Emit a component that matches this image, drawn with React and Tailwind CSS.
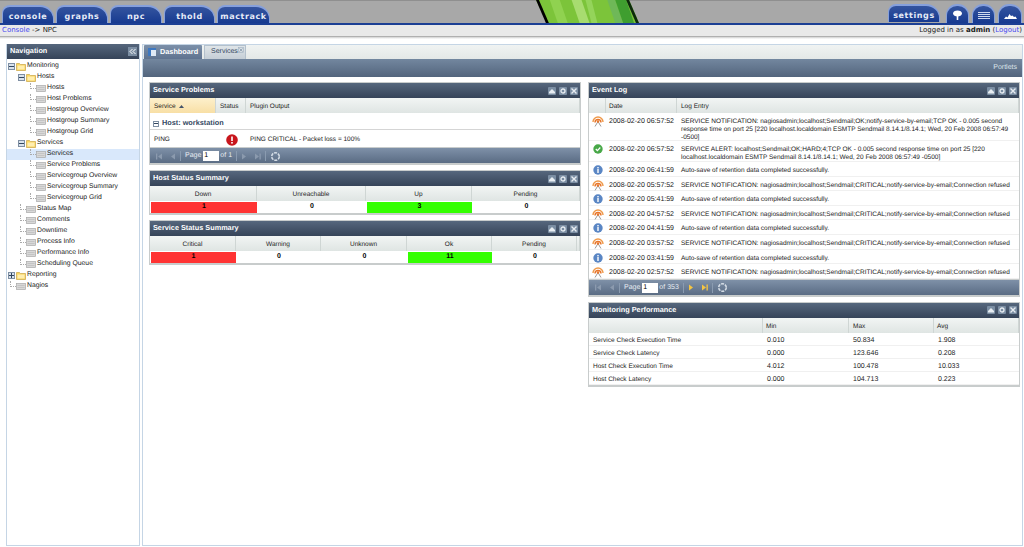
import React from 'react';

const FONT = { fontFamily: '"Liberation Sans", Arial, sans-serif' };

const LOG_ROWS = [
  { icon: 'rss', date: '2008-02-20 06:57:52', h: 'h-[28px]', text: 'SERVICE NOTIFICATION: nagiosadmin;localhost;Sendmail;OK;notify-service-by-email;TCP OK - 0.005 second response time on port 25 [220 localhost.localdomain ESMTP Sendmail 8.14.1/8.14.1; Wed, 20 Feb 2008 06:57:49 -0500]' },
  { icon: 'ok', date: '2008-02-20 06:57:52', h: 'h-[21px]', text: 'SERVICE ALERT: localhost;Sendmail;OK;HARD;4;TCP OK - 0.005 second response time on port 25 [220 localhost.localdomain ESMTP Sendmail 8.14.1/8.14.1; Wed, 20 Feb 2008 06:57:49 -0500]' },
  { icon: 'info', date: '2008-02-20 06:41:59', text: 'Auto-save of retention data completed successfully.' },
  { icon: 'rss', date: '2008-02-20 05:57:52', text: 'SERVICE NOTIFICATION: nagiosadmin;localhost;Sendmail;CRITICAL;notify-service-by-email;Connection refused' },
  { icon: 'info', date: '2008-02-20 05:41:59', text: 'Auto-save of retention data completed successfully.' },
  { icon: 'rss', date: '2008-02-20 04:57:52', text: 'SERVICE NOTIFICATION: nagiosadmin;localhost;Sendmail;CRITICAL;notify-service-by-email;Connection refused' },
  { icon: 'info', date: '2008-02-20 04:41:59', text: 'Auto-save of retention data completed successfully.' },
  { icon: 'rss', date: '2008-02-20 03:57:52', text: 'SERVICE NOTIFICATION: nagiosadmin;localhost;Sendmail;CRITICAL;notify-service-by-email;Connection refused' },
  { icon: 'info', date: '2008-02-20 03:41:59', text: 'Auto-save of retention data completed successfully.' },
  { icon: 'rss', date: '2008-02-20 02:57:52', text: 'SERVICE NOTIFICATION: nagiosadmin;localhost;Sendmail;CRITICAL;notify-service-by-email;Connection refused' },
];

const PERF_ROWS = [
  ['Service Check Execution Time', '0.010', '50.834', '1.908'],
  ['Service Check Latency', '0.000', '123.646', '0.208'],
  ['Host Check Execution Time', '4.012', '100.478', '10.033'],
  ['Host Check Latency', '0.000', '104.713', '0.223'],
];

const TREE = [
  { label: 'Monitoring', type: 'open', depth: 0 },
  { label: 'Hosts', type: 'open', depth: 1 },
  { label: 'Hosts', depth: 2 },
  { label: 'Host Problems', depth: 2 },
  { label: 'Hostgroup Overview', depth: 2 },
  { label: 'Hostgroup Summary', depth: 2 },
  { label: 'Hostgroup Grid', depth: 2 },
  { label: 'Services', type: 'open', depth: 1 },
  { label: 'Services', depth: 2, selected: true },
  { label: 'Service Problems', depth: 2 },
  { label: 'Servicegroup Overview', depth: 2 },
  { label: 'Servicegroup Summary', depth: 2 },
  { label: 'Servicegroup Grid', depth: 2 },
  { label: 'Status Map', depth: 1 },
  { label: 'Comments', depth: 1 },
  { label: 'Downtime', depth: 1 },
  { label: 'Process Info', depth: 1 },
  { label: 'Performance Info', depth: 1 },
  { label: 'Scheduling Queue', depth: 1 },
  { label: 'Reporting', type: 'closed', depth: 0 },
  { label: 'Nagios', depth: 0 },
];

function TopTab({ label, w }) {
  return (
    <div className={`${w} h-[18px] mr-[2px] pt-[4px] rounded-tl-[8px] rounded-tr-[14px] bg-gradient-to-b from-[#34549f] to-[#173a90] border-t-2 border-l border-r border-[#86a0dc] flex items-center justify-center text-[#e6ebf7] text-[8px] font-bold tracking-[0.6px]`} style={{ fontFamily: '"DejaVu Sans", sans-serif' }}>
      {label}
    </div>
  );
}

function IconTab({ children, w = 'w-[23px]' }) {
  return (
    <div className={`${w} h-[19px] ml-[3px] pt-[2px] rounded-t-[11px] bg-gradient-to-b from-[#34549f] to-[#173a90] border-t-2 border-l border-r border-[#86a0dc] flex items-center justify-center`}>
      {children}
    </div>
  );
}

function Logo() {
  return (
    <svg width="103" height="23" viewBox="0 0 104 23" className="ml-[264px] shrink-0">
      <polygon points="0,0 94,0 104,23 11,23" fill="#7cc43a" />
      <polygon points="14,0 24,0 32,23 22,23" fill="#90d250" />
      <polygon points="36,0 46,0 54,23 44,23" fill="#a8dc70" />
      <polygon points="50,0 56,0 62,23 56,23" fill="#94d45a" />
      <polygon points="72,0 80,0 88,23 80,23" fill="#6fb858" />
      <polygon points="80,0 91,0 99,23 88,23" fill="#3f9e2f" />
      <polygon points="0,0 3,0 13,23 10,23" fill="#000" />
      <polygon points="91,0 94,0 104,23 101,23" fill="#0c2a0c" />
    </svg>
  );
}

function PanelButton({ kind }) {
  return (
    <span className="w-[8px] h-[8px] rounded-[1px] bg-[#7b8ea3] flex items-center justify-center">
      <svg width="6" height="6" viewBox="0 0 6 6">
        {kind === 'min' && <path d="M0 5.5h6V4L3 1 0 4z" fill="#e8edf2" />}
        {kind === 'gear' && <circle cx="3" cy="3" r="2" stroke="#e8edf2" fill="none" strokeWidth="1.3" />}
        {kind === 'x' && <path d="M0.5 0.5l5 5M5.5 0.5l-5 5" stroke="#e8edf2" strokeWidth="1.4" />}
      </svg>
    </span>
  );
}

function Panel({ title, children, className = '' }) {
  return (
    <div className={`border border-[#c8cccc] border-b-2 bg-white ${className}`}>
      <div className="h-[15px] bg-gradient-to-b from-[#56677d] to-[#364459] flex items-center justify-between pl-[3px] pr-[2px] text-white text-[7.3px] font-bold">
        <span>{title}</span>
        <span className="flex gap-[3px]">
          <PanelButton kind="min" />
          <PanelButton kind="gear" />
          <PanelButton kind="x" />
        </span>
      </div>
      {children}
    </div>
  );
}

function HeadCell({ children, className = '' }) {
  return (
    <div className={`h-[15px] pt-[3px] bg-gradient-to-b from-[#f2f5f4] to-[#dfe5e3] border-r border-[#cfd6d4] flex items-center text-[6.5px] text-[#222] ${className}`}>
      {children}
    </div>
  );
}

function PagerIcon({ dir, bar, active }) {
  const color = active ? '#f5c542' : '#8b9aae';
  return (
    <svg width="7" height="7" viewBox="0 0 7 7" className="shrink-0">
      {dir === 'left' ? <polygon points="6,0.5 6,6.5 2,3.5" fill={color} /> : <polygon points="1,0.5 1,6.5 5,3.5" fill={color} />}
      {bar && <rect x={dir === 'left' ? 0 : 5.5} y="0.5" width="1.3" height="6" fill={color} />}
    </svg>
  );
}

function Pager({ total, active }) {
  return (
    <div className="h-[16px] pt-[1px] bg-gradient-to-b from-[#7f91a8] to-[#5a6c84] flex items-center pl-[6px] text-[7px] text-white border-t border-[#c8cccc]">
      <PagerIcon dir="left" bar />
      <span className="w-[6px]" />
      <PagerIcon dir="left" />
      <span className="w-px h-[10px] bg-[#8a9bb0] mx-[4px]" />
      <span className="text-[#e8edf2]">Page</span>
      <span className="w-[16px] h-[10px] bg-white text-black ml-[2px] mr-[1px] pl-[1px] leading-[10px]">1</span>
      <span className="text-[#e8edf2]">of {total}</span>
      <span className="w-px h-[10px] bg-[#8a9bb0] mx-[4px]" />
      <PagerIcon dir="right" active={active} />
      <span className="w-[6px]" />
      <PagerIcon dir="right" bar active={active} />
      <span className="w-px h-[10px] bg-[#8a9bb0] mx-[4px]" />
      <svg width="11" height="11" viewBox="0 0 11 11">
        <circle cx="5.5" cy="5.5" r="3.8" fill="none" stroke="#d5dde6" strokeWidth="1.6" strokeDasharray="3 1" />
      </svg>
    </div>
  );
}

function SummaryPanel({ title, cols, gridClass }) {
  return (
    <Panel title={title}>
      <div className={`grid ${gridClass}`}>
        {cols.map((c, i) => (
          <HeadCell key={i} className="justify-center">{c.label}</HeadCell>
        ))}
        {cols.map((c, i) => (
          <div key={i} className="h-[12px] flex items-end justify-center text-[7px] font-bold text-black">
            <span className={`w-full h-[11px] flex items-center justify-center ml-px ${c.bg || ''}`}>{c.value}</span>
          </div>
        ))}
      </div>
    </Panel>
  );
}

function TreeIcon({ type }) {
  if (type) {
    return (
      <svg width="10" height="9" viewBox="0 0 10 9" className="shrink-0">
        <path d="M0.5 1.5h3l1 1h5v6h-9z" fill="#fbd75f" stroke="#c9a545" strokeWidth="0.7" />
        <rect x="1.5" y="3.5" width="7" height="4" fill="#ffeeb0" />
      </svg>
    );
  }
  return (
    <svg width="10" height="7" viewBox="0 0 10 7" className="shrink-0">
      <rect x="0.5" y="0.5" width="9" height="6" fill="#d8d8d8" stroke="#a8a8a8" strokeWidth="0.7" />
      <path d="M1.5 2.5h7M1.5 4.5h7" stroke="#bcbcbc" strokeWidth="0.7" />
    </svg>
  );
}

function Expander({ open }) {
  return (
    <span className="w-[7px] h-[7px] shrink-0 mr-px border border-[#7f8fa3] bg-[#d9e2ec] flex items-center justify-center relative">
      <span className="w-[5px] h-px bg-[#33475f]" />
      {!open && <span className="w-px h-[5px] bg-[#33475f] absolute" />}
    </span>
  );
}

function TreeRow({ item }) {
  const indent = item.type
    ? item.depth === 0 ? 'pl-[1px]' : 'pl-[11px]'
    : item.depth === 0 ? 'pl-[3px]' : item.depth === 1 ? 'pl-[13px]' : 'pl-[23px]';
  return (
    <div className={`h-[11px] flex items-center ${indent} text-[6.8px] text-[#222] ${item.selected ? 'bg-[#d9e8fb]' : ''}`}>
      {item.type ? <Expander open={item.type === 'open'} /> : <span className="w-[6px] h-[6px] shrink-0 border-l border-b border-dotted border-[#aaa] -translate-y-[3px]" />}
      <TreeIcon type={item.type} />
      <span className="ml-px whitespace-nowrap">{item.label}</span>
    </div>
  );
}

function LogIcon({ kind }) {
  if (kind === 'rss') {
    return (
      <svg width="12" height="11" viewBox="0 0 12 11">
        <path d="M1 6a5 5 0 0 1 10 0" fill="none" stroke="#ef9a4a" strokeWidth="1.4" />
        <path d="M3 6.5a3 3 0 0 1 6 0" fill="none" stroke="#e8762b" strokeWidth="1.4" />
        <path d="M6 5.5l-3 5M6 5.5l3 5" fill="none" stroke="#9a9a9a" strokeWidth="1" />
        <circle cx="6" cy="5.5" r="1.2" fill="#e8762b" />
      </svg>
    );
  }
  if (kind === 'ok') {
    return (
      <svg width="10" height="10" viewBox="0 0 10 10">
        <circle cx="5" cy="5" r="4.7" fill="#48a848" />
        <path d="M2.8 5l1.6 1.7 2.9-3.2" fill="none" stroke="#fff" strokeWidth="1.2" />
      </svg>
    );
  }
  return (
    <svg width="10" height="10" viewBox="0 0 10 10">
      <circle cx="5" cy="5" r="4.7" fill="#5a86c4" />
      <rect x="4.3" y="2" width="1.4" height="1.4" fill="#fff" />
      <rect x="4.3" y="4" width="1.4" height="4" fill="#fff" />
    </svg>
  );
}

export default function App() {
  return (
    <div className="w-[1024px] h-[547px] overflow-hidden bg-white flex flex-col [text-rendering:geometricPrecision]" style={FONT}>
      <header className="h-[25px] shrink-0 bg-[#a8a8a8] border-t border-[#8f8f8f] border-b-2 border-b-[#1c3f94] flex items-end pl-[2px]">
        <TopTab label="console" w="w-[52px]" />
        <TopTab label="graphs" w="w-[52px]" />
        <TopTab label="npc" w="w-[52px]" />
        <TopTab label="thold" w="w-[51px]" />
        <TopTab label="mactrack" w="w-[53px]" />
        <Logo />
        <div className="ml-auto flex pr-[2px]">
          <TopTab label="settings" w="w-[52px]" />
          <span className="w-[1px]" />
          <IconTab>
            <svg width="11" height="11" viewBox="0 0 11 11">
              <path d="M1 3.5C1 1.5 3 .5 5.5.5S10 1.5 10 3.5 7.5 6.5 5.5 6.5 1 5.5 1 3.5z" fill="#fff" />
              <rect x="4.7" y="6" width="1.6" height="4" fill="#fff" />
            </svg>
          </IconTab>
          <IconTab>
            <svg width="12" height="8" viewBox="0 0 12 8">
              <path d="M0 .5h12M0 2.5h12M0 4.5h12M0 6.5h12" stroke="#cfdaf0" strokeWidth="1" />
            </svg>
          </IconTab>
          <IconTab w="w-[24px]">
            <svg width="13" height="6" viewBox="0 0 13 6">
              <path d="M0 6l2-2.5 1.5 1L5.5 1 7 3l1.5-.5L10 4l1.5-.5L13 6z" fill="#fff" />
            </svg>
          </IconTab>
        </div>
      </header>

      <div className="h-[12px] shrink-0 bg-[#e9e9e9] flex items-center justify-between px-[2px] text-[7px] text-[#222] border-b border-[#b0b0b0]" style={{ fontFamily: '"DejaVu Sans", sans-serif' }}>
        <span><span className="text-[#4a4af0]">Console</span> -&gt; NPC</span>
        <span>Logged in as <b>admin</b> (<span className="text-[#4a4af0]">Logout</span>)</span>
      </div>
      <div className="h-[2px] shrink-0 bg-gradient-to-b from-[#cfcfcf] to-white" />

      <div className="flex-1 min-h-0 flex pt-[5px] pl-[6px] pr-[1px] pb-[1px] gap-[2px]">
        <aside className="w-[134px] shrink-0 border border-[#c5d5e5] border-t-0 flex flex-col">
          <div className="h-[15px] bg-gradient-to-b from-[#56677d] to-[#364459] flex items-center justify-between pl-[3px] pr-[2px] text-white text-[7.3px] font-bold">
            <span>Navigation</span>
            <span className="w-[9px] h-[9px] bg-[#7b8ea3] flex items-center justify-center">
              <svg width="7" height="7" viewBox="0 0 7 7">
                <path d="M3.5 1L1 3.5 3.5 6M6.5 1L4 3.5 6.5 6" fill="none" stroke="#fff" strokeWidth="1" />
              </svg>
            </span>
          </div>
          <div className="pt-[2px]">
            {TREE.map((item, i) => <TreeRow key={i} item={item} />)}
          </div>
        </aside>

        <main className="flex-1 min-w-0 border border-[#c5d5e5] flex flex-col">
          <div className="h-[14px] shrink-0 bg-gradient-to-b from-[#f0f3f2] to-[#e4e8e7] flex items-end pl-[1px] gap-[2px]">
            <div className="h-[14px] w-[58px] bg-gradient-to-b from-[#7c90a9] to-[#5f7390] flex items-center pl-[4px] gap-[4px] text-white text-[7.3px] font-bold rounded-t-[1px]">
              <svg width="8" height="8" viewBox="0 0 8 8">
                <rect width="8" height="8" fill="#dfe9f5" />
                <rect y="0" width="8" height="2" fill="#3e78c0" />
                <rect y="2" width="3" height="6" fill="#3e78c0" />
              </svg>
              Dashboard
            </div>
            <div className="h-[14px] w-[42px] bg-gradient-to-b from-[#dfe5e8] to-[#c5ced6] border border-b-0 border-[#b3c0cc] flex items-center pl-[6px] text-[#33475f] text-[7px] relative">
              Services
              <svg width="6" height="6" viewBox="0 0 6 6" className="absolute right-[1px] top-[1px]">
                <rect x="0.5" y="0.5" width="5" height="5" fill="none" stroke="#9fb0c0" strokeWidth="0.6" />
                <path d="M1.5 1.5l3 3M4.5 1.5l-3 3" stroke="#7f92a6" strokeWidth="0.7" />
              </svg>
            </div>
          </div>
          <div className="h-[18px] shrink-0 bg-gradient-to-b from-[#73879f] to-[#53657d] flex items-center justify-end pr-[5px] text-[7px] text-[#dbe3ea]">
            Portlets
          </div>

          <div className="flex gap-[7px] pl-[6px] pt-[5px]">
            <div className="w-[432px] flex flex-col gap-[5px]">
              <Panel title="Service Problems">
                <div className="flex">
                  <HeadCell className="w-[66px] pl-[4px] !from-[#fdf0cc] !to-[#f8dfa5] gap-[3px]">
                    Service
                    <svg width="5" height="4" viewBox="0 0 5 4"><polygon points="2.5,0 5,3 0,3" fill="#44546a" /></svg>
                  </HeadCell>
                  <HeadCell className="w-[30px] pl-[4px]">Status</HeadCell>
                  <HeadCell className="flex-1 pl-[4px]">Plugin Output</HeadCell>
                </div>
                <div className="h-[17px] pt-[5px] flex items-center pl-[3px] gap-[3px] text-[7.3px] font-bold text-[#33475f] border-b border-[#d5d5d5]">
                  <span className="w-[6px] h-[6px] border border-[#7f8fa3] flex items-center justify-center"><span className="w-[4px] h-px bg-[#33475f]" /></span>
                  Host: workstation
                </div>
                <div className="h-[17px] pt-[2px] flex items-center text-[6.5px] text-[#222]">
                  <span className="w-[66px] pl-[4px]">PING</span>
                  <span className="w-[30px] flex justify-center pl-[2px]">
                    <svg width="12" height="12" viewBox="0 0 12 12">
                      <circle cx="6" cy="6" r="5.8" fill="#c8161c" />
                      <rect x="5.2" y="2.5" width="1.6" height="4.5" fill="#fff" />
                      <rect x="5.2" y="8" width="1.6" height="1.6" fill="#fff" />
                    </svg>
                  </span>
                  <span className="pl-[4px]">PING CRITICAL - Packet loss = 100%</span>
                </div>
                <Pager total="1" />
              </Panel>

              <SummaryPanel
                title="Host Status Summary"
                gridClass="grid-cols-[107px_109px_106px_1fr]"
                cols={[
                  { label: 'Down', value: '1', bg: 'bg-[#ff3333]' },
                  { label: 'Unreachable', value: '0' },
                  { label: 'Up', value: '3', bg: 'bg-[#33ff00]' },
                  { label: 'Pending', value: '0' },
                ]}
              />
              <SummaryPanel
                title="Service Status Summary"
                gridClass="grid-cols-[86px_85px_86px_85px_85px_1fr]"
                cols={[
                  { label: 'Critical', value: '1', bg: 'bg-[#ff3333]' },
                  { label: 'Warning', value: '0' },
                  { label: 'Unknown', value: '0' },
                  { label: 'Ok', value: '11', bg: 'bg-[#33ff00]' },
                  { label: 'Pending', value: '0' },
                  { label: '', value: '' },
                ]}
              />
            </div>

            <div className="w-[432px] flex flex-col gap-[5px]">
              <Panel title="Event Log">
                <div className="flex">
                  <HeadCell className="w-[17px]" />
                  <HeadCell className="w-[71px] pl-[3px]">Date</HeadCell>
                  <HeadCell className="flex-1 pl-[4px]">Log Entry</HeadCell>
                </div>
                {LOG_ROWS.map((row, i) => (
                  <div key={i} className={`${row.h || 'h-[14.6px]'} flex items-start pt-[5px] border-b border-[#f0f0f0] text-[6.5px] leading-[8.2px] text-[#222]`}>
                    <span className="w-[17px] flex justify-center shrink-0 -mt-[2px]"><LogIcon kind={row.icon} /></span>
                    <span className="w-[71px] shrink-0 pl-[3px] text-[7px]">{row.date}</span>
                    <span className="flex-1 pl-[4px] pr-[8px]">{row.text}</span>
                  </div>
                ))}
                <Pager total="353" active />
              </Panel>

              <Panel title="Monitoring Performance">
                <div className="grid grid-cols-[174px_86px_85px_1fr]">
                  <HeadCell />
                  <HeadCell className="pl-[3px]">Min</HeadCell>
                  <HeadCell className="pl-[4px]">Max</HeadCell>
                  <HeadCell className="pl-[3px]">Avg</HeadCell>
                  {PERF_ROWS.map((row) => row.map((cell, j) => (
                    <div key={row[0] + j} className={`h-[13px] pt-[4px] flex items-center pl-[4px] text-[#222] border-b border-[#f0f0f0] ${j === 0 ? 'text-[6.5px]' : 'text-[7px]'}`}>{cell}</div>
                  )))}
                </div>
              </Panel>
            </div>
          </div>
        </main>
      </div>
    </div>
  );
}
